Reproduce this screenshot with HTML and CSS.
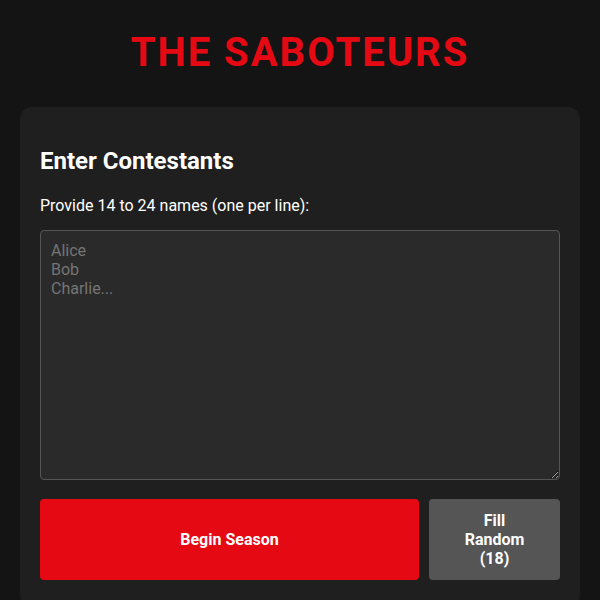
FILE: index.html
```html
<!DOCTYPE html>
<html>
<head>
<meta charset="utf-8">
<link rel="stylesheet" href="styles.css">
</head>
<body>
<h1 class="title">THE SABOTEURS</h1>
<div class="card">
  <h2 class="card-title">Enter Contestants</h2>
  <p class="hint">Provide 14 to 24 names (one per line):</p>
  <textarea class="names" placeholder="Alice&#10;Bob&#10;Charlie..."></textarea>
  <div class="actions">
    <button class="btn btn-primary">Begin Season</button>
    <button class="btn btn-secondary">Fill Random (18)</button>
  </div>
</div>
</body>
</html>
```
FILE: styles.css
```css
html, body {
  margin: 0;
  padding: 0;
  background: #141414;
  font-family: Roboto, "Liberation Sans", Arial, sans-serif;
  color: #ffffff;
}
body {
  padding: 0 20px;
}
.title {
  margin: 0;
  padding-top: 29px;
  padding-bottom: 31px;
  text-align: center;
  color: #e50914;
  font-size: 40px;
  font-weight: 700;
  letter-spacing: 2px;
  line-height: 47px;
}
.card {
  background: #1f1f1f;
  border-radius: 12px;
  padding: 40px 20px 20px;
  height: 500px;
  box-sizing: border-box;
}
.card-title {
  margin: 0;
  font-size: 24px;
  font-weight: 700;
  line-height: 28px;
}
.hint {
  margin: 21px 0 0;
  font-size: 16px;
  line-height: 19px;
}
.names {
  display: block;
  box-sizing: border-box;
  width: 100%;
  height: 250px;
  margin: 15px 0 0;
  padding: 10px;
  background: #2a2a2a;
  border: 1px solid #555555;
  border-radius: 4px;
  color: #ffffff;
  font-family: Roboto, "Liberation Sans", Arial, sans-serif;
  font-size: 16px;
  line-height: 19px;
  resize: vertical;
}
.names::placeholder {
  color: #757575;
}
.actions {
  display: flex;
  gap: 10px;
  margin-top: 19px;
}
.btn {
  border: none;
  border-radius: 4px;
  color: #ffffff;
  font-family: Roboto, "Liberation Sans", Arial, sans-serif;
  font-size: 16px;
  font-weight: 700;
  line-height: 19px;
  padding: 12px 30px;
  height: 81px;
}
.btn-primary {
  flex: 1;
  background: #e50914;
}
.btn-secondary {
  width: 131px;
  background: #555555;
}
```
